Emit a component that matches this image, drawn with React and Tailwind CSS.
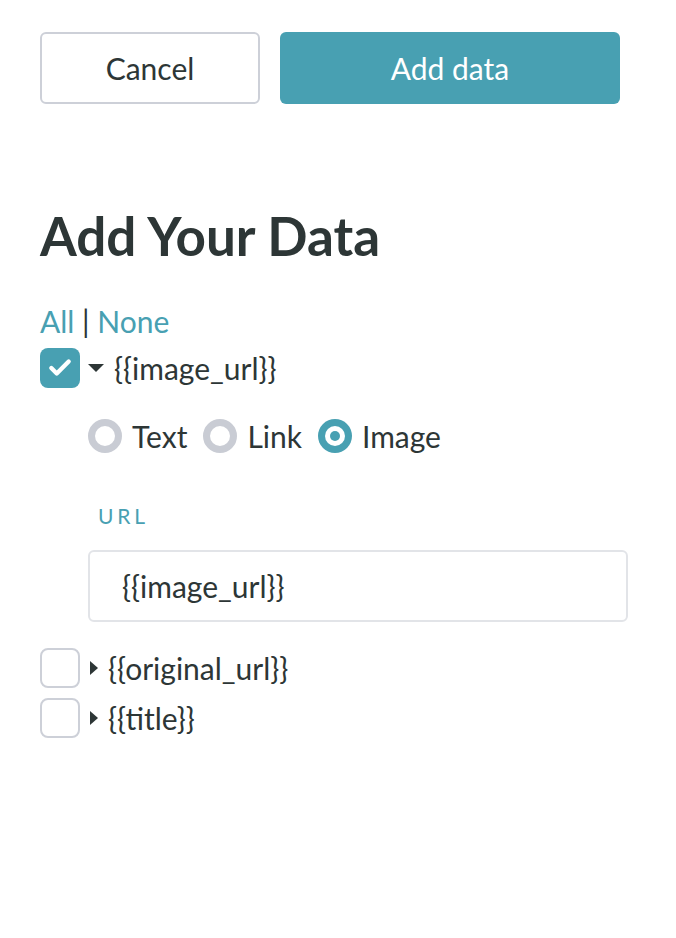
import { Check } from 'lucide-react';

const font = { fontFamily: 'Lato, "Open Sans", sans-serif' };

function Radio({ label, checked }) {
    return (
        <label className="flex items-center gap-[10px]">
            {checked ? (
                <span className="w-[34px] h-[34px] rounded-full bg-[#48a0b2] flex items-center justify-center">
                    <span className="w-[20px] h-[20px] rounded-full bg-white flex items-center justify-center">
                        <span className="w-[10px] h-[10px] rounded-full bg-[#48a0b2]" />
                    </span>
                </span>
            ) : (
                <span className="w-[34px] h-[34px] rounded-full border-[7px] border-[#c9ccd4] bg-white" />
            )}
            <span>{label}</span>
        </label>
    );
}

function Row({ label, checked, open }) {
    return (
        <div className="flex items-center h-[40px]">
            {checked ? (
                <span className="w-[40px] h-[40px] rounded-[8px] bg-[#48a0b2] flex items-center justify-center">
                    <Check size={26} strokeWidth={4} className="text-white" />
                </span>
            ) : (
                <span className="w-[40px] h-[40px] rounded-[8px] border-2 border-[#cdd0d8] bg-white" />
            )}
            {open ? (
                <svg width="16" height="10" viewBox="0 0 16 10" className="ml-[8px] mr-[10px]">
                    <path d="M0 1h16L8 9z" fill="#2d3636" />
                </svg>
            ) : (
                <svg width="10" height="16" viewBox="0 0 10 16" className="ml-[9px] mr-[9px]">
                    <path d="M1 1v14l8-7z" fill="#2d3636" />
                </svg>
            )}
            <span>{label}</span>
        </div>
    );
}

export default function App() {
    return (
        <div style={font} className="w-[676px] h-[938px] bg-white text-[#2d3636] px-[40px] pt-[32px]">
            <div className="flex gap-[20px]">
                <button className="w-[220px] h-[72px] rounded-[6px] border-2 border-[#cdd0d8] bg-white text-[30px] text-[#2d3636]">
                    Cancel
                </button>
                <button className="w-[340px] h-[72px] rounded-[6px] bg-[#48a0b2] text-[30px] text-white">
                    Add data
                </button>
            </div>

            <h1 className="mt-[102px] text-[53px] font-bold leading-[60px] text-[#2d3636]">Add Your Data</h1>

            <div className="mt-[38px] text-[30px] leading-[34px]">
                <span className="text-[#48a0b2]">All</span>
                <span> | </span>
                <span className="text-[#48a0b2]">None</span>
            </div>

            <div className="text-[30px] mt-[10px]">
                <Row label="{{image_url}}" checked open />

                <div className="ml-[48px]">
                    <div className="flex gap-[16px] mt-[28px] h-[40px] items-center">
                        <Radio label="Text" />
                        <Radio label="Link" />
                        <Radio label="Image" checked />
                    </div>

                    <div className="mt-[48px] ml-[10px] text-[21px] tracking-[0.18em] text-[#48a0b2] leading-[24px]">URL</div>

                    <div className="mt-[22px] w-[540px] h-[72px] rounded-[6px] border-2 border-[#e2e4e8] flex items-center pl-[32px]">
                        {'{{image_url}}'}
                    </div>
                </div>

                <div className="mt-[26px] flex flex-col gap-[10px]">
                    <Row label="{{original_url}}" />
                    <Row label="{{title}}" />
                </div>
            </div>
        </div>
    );
}
